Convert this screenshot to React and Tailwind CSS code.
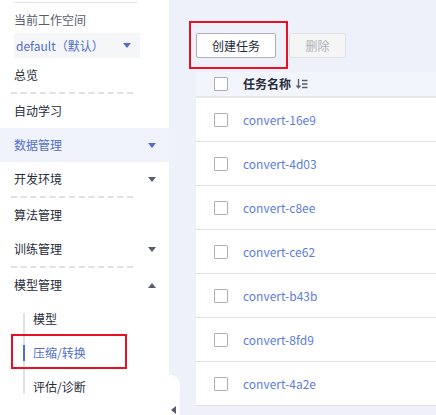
import React from "react";

const font = { fontFamily: '"Noto Sans CJK SC", "Noto Sans", sans-serif' };

const Caret = ({ up, color = "#575d6c" }) => (
  <svg width="8" height="5" viewBox="0 0 8 5" className={up ? "rotate-180" : ""}>
    <path d="M0 0 L8 0 L4 5 Z" fill={color} />
  </svg>
);

const Dashed = () => (
  <div className="mx-[11px] w-[122px] border-t-2 border-dashed border-[#dfe1e6]" />
);

const MenuItem = ({ label, caret, active, up }) => (
  <div
    className={`h-[34px] flex items-center justify-between pl-[14px] pr-[13px] ${
      active ? "bg-[#f0f3fc] text-[#526ecc]" : "text-[#252b3a]"
    }`}
  >
    <span>{label}</span>
    {caret && <Caret up={up} color={active ? "#526ecc" : "#575d6c"} />}
  </div>
);

const SortIcon = () => (
  <svg width="12" height="10" viewBox="0 0 12 10" className="ml-[5px]">
    <path d="M2.5 0 V8.5 M0.5 6.5 L2.5 8.8 L4.5 6.5" stroke="#575d6c" strokeWidth="1.3" fill="none" />
    <path d="M6 1.5 H11.5 M6 5 H11.5 M6 8.5 H11.5" stroke="#575d6c" strokeWidth="1.3" />
  </svg>
);

const Checkbox = () => (
  <div className="w-[14px] h-[14px] border border-[#adb0b8] rounded-[1px] bg-white" />
);

const rows = [
  "convert-16e9",
  "convert-4d03",
  "convert-c8ee",
  "convert-ce62",
  "convert-b43b",
  "convert-8fd9",
  "convert-4a2e",
];

export default function App() {
  return (
    <div className="w-[436px] h-[415px] flex bg-[#eef1fa] overflow-hidden text-[12px]" style={font}>
      {/* sidebar */}
      <div className="w-[169px] shrink-0 bg-white relative">
        <div className="h-[2px]" />
        <div className="ml-[14px] w-[123px] border-t border-[#dfe1e6]" />
        <div className="pl-[14px] pt-[8px] pb-[4px] text-[#575d6c] leading-[18px]">当前工作空间</div>
        <div className="ml-[14px] w-[126px] h-[25px] bg-[#f5f6f8] flex items-center justify-between pl-[2px] pr-[9px] text-[#526ecc]">
          <span>default（默认）</span>
          <Caret color="#526ecc" />
        </div>
        <MenuItem label="总览" />
        <Dashed />
        <MenuItem label="自动学习" />
        <MenuItem label="数据管理" caret active />
        <MenuItem label="开发环境" caret />
        <Dashed />
        <MenuItem label="算法管理" />
        <MenuItem label="训练管理" caret />
        <Dashed />
        <MenuItem label="模型管理" caret up />
        <div className="relative">
          <div className="absolute left-[23px] top-[11px] bottom-[10px] w-[2px] bg-[#dfe1e6]" />
          <div className="h-[34px] flex items-center pl-[33px] text-[#252b3a]">模型</div>
          <div className="h-[34px] flex items-center pl-[33px] text-[#526ecc] relative">
            <div className="absolute left-[23px] top-[9px] w-[2px] h-[16px] bg-[#526ecc]" />
            压缩/转换
            <div className="absolute left-[11px] top-[-2px] w-[116px] h-[35px] border-2 border-[#e81123]" />
          </div>
          <div className="h-[34px] flex items-center pl-[33px] text-[#252b3a]">评估/诊断</div>
        </div>
        {/* collapse tab */}
        <div className="absolute left-[160px] top-[375px] w-[20px] h-[40px] bg-white rounded-tr-[10px] flex items-end justify-end pb-[1px] pr-[4px]">
          <svg width="5" height="8" viewBox="0 0 5 8">
            <path d="M5 0 L0 4 L5 8 Z" fill="#575d6c" />
          </svg>
        </div>
      </div>

      {/* main */}
      <div className="flex-1 pl-[27px] min-w-0">
        <div className="h-[33px]" />
        <div className="flex gap-[13px] relative">
          <div className="absolute left-[-7px] top-[-12px] w-[99px] h-[48px] border-2 border-[#e81123]" />
          <button className="w-[80px] h-[25px] bg-white border border-[#adb0b8] rounded-[2px] text-[#252b3a]">
            创建任务
          </button>
          <button className="w-[57px] h-[25px] bg-[#f5f5f6] border border-[#dfe1e6] rounded-[2px] text-[#adb0b8]">
            删除
          </button>
        </div>
        <div className="h-[14px]" />
        <div className="bg-white">
          <div className="h-[26px] bg-[#f3f5fc] border-b-2 border-[#e5e7eb] flex items-center pl-[18px]">
            <Checkbox />
            <span className="ml-[15px] font-bold text-[#252b3a]">任务名称</span>
            <SortIcon />
          </div>
          {rows.map((r) => (
            <div key={r} className="h-[44px] border-b border-[#dfe1e6] flex items-center pl-[18px]">
              <Checkbox />
              <span className="ml-[15px] text-[#5e7ce0]">{r}</span>
            </div>
          ))}
        </div>
      </div>
    </div>
  );
}
